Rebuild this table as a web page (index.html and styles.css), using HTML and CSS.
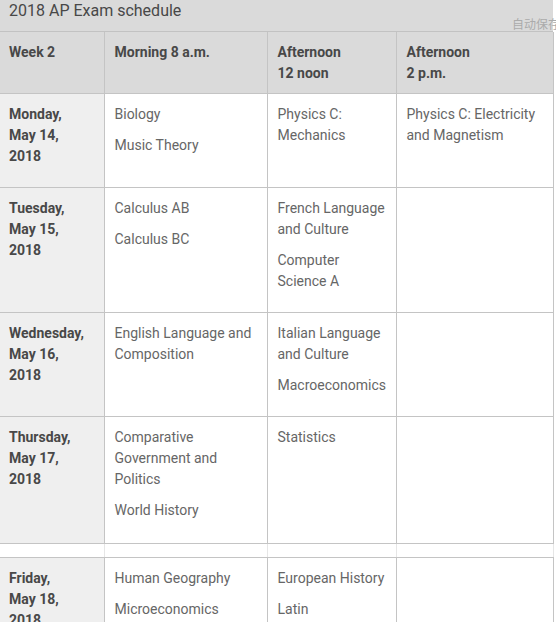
FILE: index.html
```html
<!DOCTYPE html>
<html lang="en">
<head>
<meta charset="utf-8">
<title>2018 AP Exam schedule</title>
<link rel="stylesheet" href="styles.css">
</head>
<body>
<div class="page">
  <div class="caption">2018 AP Exam schedule</div>
  <span class="autosave">自动保存</span>
  <table class="schedule">
    <colgroup>
      <col class="c1"><col class="c2"><col class="c3"><col class="c4">
    </colgroup>
    <thead>
      <tr>
        <th>Week 2</th>
        <th>Morning 8 a.m.</th>
        <th>Afternoon<br>12 noon</th>
        <th>Afternoon<br>2 p.m.</th>
      </tr>
    </thead>
    <tbody>
      <tr>
        <th class="day"><p>Monday,<br>May 14,<br>2018</p></th>
        <td><p>Biology</p><p>Music Theory</p></td>
        <td><p>Physics C:<br>Mechanics</p></td>
        <td><p>Physics C: Electricity and Magnetism</p></td>
      </tr>
      <tr>
        <th class="day"><p>Tuesday,<br>May 15,<br>2018</p></th>
        <td><p>Calculus AB</p><p>Calculus BC</p></td>
        <td><p>French Language and Culture</p><p>Computer Science A</p></td>
        <td></td>
      </tr>
      <tr>
        <th class="day"><p>Wednesday,<br>May 16,<br>2018</p></th>
        <td><p>English Language and Composition</p></td>
        <td><p>Italian Language and Culture</p><p>Macroeconomics</p></td>
        <td></td>
      </tr>
      <tr class="tall">
        <th class="day"><p>Thursday,<br>May 17,<br>2018</p></th>
        <td><p>Comparative Government and Politics</p><p>World History</p></td>
        <td><p>Statistics</p></td>
        <td></td>
      </tr>
      <tr class="gap">
        <td></td><td></td><td></td><td></td>
      </tr>
      <tr>
        <th class="day"><p>Friday,<br>May 18,<br>2018</p></th>
        <td><p>Human Geography</p><p>Microeconomics</p></td>
        <td><p>European History</p><p>Latin</p></td>
        <td></td>
      </tr>
    </tbody>
  </table>
</div>
</body>
</html>
```

FILE: styles.css
```css
html, body {
  margin: 0;
  padding: 0;
  background: #ffffff;
}

body {
  font-family: Roboto, "Liberation Sans", Arial, sans-serif;
  font-size: 14px;
  color: #666;
}

.page {
  position: relative;
  width: 556px;
  height: 622px;
  overflow: hidden;
}

.caption {
  width: 544px;
  height: 31px;
  padding-left: 9px;
  background: #dadada;
  border-bottom: 1px solid #c2c2c2;
  font-size: 16px;
  line-height: 21px;
  color: #484848;
}

.autosave {
  position: absolute;
  left: 512px;
  top: 16px;
  font-family: "Noto Sans CJK SC", sans-serif;
  font-size: 12px;
  line-height: 16px;
  color: #ababab;
  white-space: nowrap;
}

.schedule {
  width: 553px;
  table-layout: fixed;
  border-collapse: collapse;
}

.c1 { width: 104px; }
.c2 { width: 163px; }
.c3 { width: 129px; }
.c4 { width: 157px; }

.schedule th,
.schedule td {
  vertical-align: top;
  text-align: left;
  border: 1px solid #c4c4c4;
  padding: 10px;
  line-height: 21px;
}

.schedule tr > :first-child {
  border-left: none;
}

.schedule thead th {
  background: #dadada;
  font-weight: 700;
  color: #484848;
  padding: 10px 9px 9px 10px;
  height: 42px;
  border-top: none;
}

.schedule thead th:first-child {
  padding-left: 9px;
}

.schedule .day {
  background: #efefef;
  font-weight: 700;
  color: #484848;
  padding-left: 9px;
}

.schedule p {
  margin: 0 0 10px 0;
}

.schedule .tall > * {
  padding-bottom: 12px;
}

.schedule .gap td {
  height: 13px;
  padding: 0;
  background: #ffffff;
  border-left-color: #e6e6e6;
  border-right-color: #e6e6e6;
}
```
